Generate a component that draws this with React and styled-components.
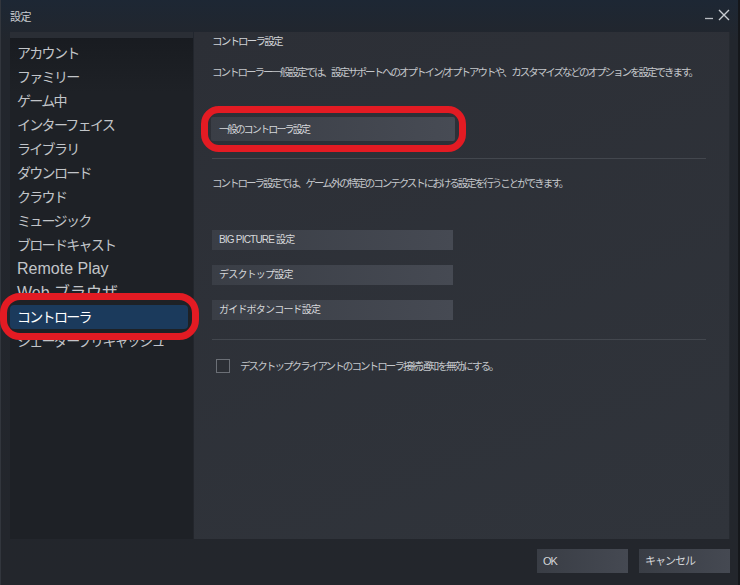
import React from "react";
import styled, { createGlobalStyle } from "styled-components";

const GlobalStyle = createGlobalStyle`
  html, body {
    margin: 0;
    padding: 0;
    background: #22252b;
  }
  body {
    font-family: "Liberation Sans", "Noto Sans CJK JP", sans-serif;
  }
`;

const menu = [
  { label: "アカウント" },
  { label: "ファミリー" },
  { label: "ゲーム中" },
  { label: "インターフェイス" },
  { label: "ライブラリ" },
  { label: "ダウンロード" },
  { label: "クラウド" },
  { label: "ミュージック" },
  { label: "ブロードキャスト" },
  { label: "Remote Play", latin: true },
  { label: "Web ブラウザ", latin: true },
  { label: "コントローラ", active: true },
  { label: "シェーダープリキャッシュ" },
];

const App = () => {
  return (
    <Window>
      <GlobalStyle />
      <TitleBar>
        <Title>設定</Title>
        <WinControls>
          <svg width="10" height="10" viewBox="0 0 10 10">
            <path d="M1 8.5h8" stroke="#b8bcc2" strokeWidth="1.3" />
          </svg>
          <svg width="12" height="12" viewBox="0 0 12 12">
            <path d="M1 1l10 10M11 1L1 11" stroke="#c8ccd2" strokeWidth="1.4" />
          </svg>
        </WinControls>
      </TitleBar>

      <Body>
        <Sidebar>
          <SideTop />
          <MenuList>
            {menu.map((m) => (
              <MenuItem key={m.label} $active={m.active} $latin={m.latin}>
                {m.label}
              </MenuItem>
            ))}
          </MenuList>
          <SideRing />
        </Sidebar>

        <Content>
          <Heading>コントローラ設定</Heading>
          <Text $top={17}>
            コントローラー一般設定では、設定サポートへのオプトイン/オプトアウトや、カスタマイズなどのオプションを設定できます。
          </Text>
          <ButtonWrap>
            <BigButton>一般のコントローラ設定</BigButton>
            <ButtonRing />
          </ButtonWrap>
          <Divider $top={17} />
          <Text $top={17}>
            コントローラ設定では、ゲーム外の特定のコンテクストにおける設定を行うことができます。
          </Text>
          <ButtonStack>
            <Button>BIG PICTURE 設定</Button>
            <Button>デスクトップ設定</Button>
            <Button>ガイドボタンコード設定</Button>
          </ButtonStack>
          <Divider $top={19} />
          <CheckRow>
            <Check />
            <CheckLabel>デスクトップクライアントのコントローラ接続通知を無効にする。</CheckLabel>
          </CheckRow>
        </Content>
      </Body>

      <Footer>
        <FooterButton>OK</FooterButton>
        <FooterButton>キャンセル</FooterButton>
      </Footer>
    </Window>
  );
};

export default App;

const Window = styled.div`
  width: 740px;
  height: 585px;
  display: flex;
  flex-direction: column;
  background: linear-gradient(180deg, #1d2734 0px, #22262d 40px, #23262c 100%);
  box-shadow: inset 1px 0 0 #32363d, inset -2px 0 0 #15171b;
  overflow: hidden;
`;

const TitleBar = styled.div`
  height: 32px;
  display: flex;
  align-items: center;
  justify-content: space-between;
  padding: 0 10px;
`;

const Title = styled.div`
  font-family: "Noto Sans CJK JP", sans-serif;
  font-size: 11px;
  color: #c9ccd0;
  letter-spacing: -0.5px;
`;

const WinControls = styled.div`
  display: flex;
  align-items: center;
  gap: 4px;
  margin-top: -2px;
`;

const Body = styled.div`
  height: 507px;
  display: flex;
  padding: 0 10px;
  gap: 1px;
`;

const Sidebar = styled.div`
  position: relative;
  width: 183px;
  display: flex;
  flex-direction: column;
  background: linear-gradient(180deg, #181b20 0px, #1e2126 60px, #1e2126 100%);
`;

const SideTop = styled.div`
  height: 6px;
  background: #2a2e35;
`;

const MenuList = styled.div`
  padding-top: 3px;
  display: flex;
  flex-direction: column;
`;

const MenuItem = styled.div`
  height: 24px;
  line-height: 24px;
  padding-left: 7px;
  margin-right: 5px;
  font-family: "Liberation Sans", "Noto Sans CJK JP", sans-serif;
  font-size: ${(p) => (p.$latin ? "16px" : "14px")};
  letter-spacing: ${(p) => (p.$latin ? "0" : "-1.7px")};
  color: ${(p) => (p.$active ? "#ffffff" : "#c2c5c9")};
  background: ${(p) => (p.$active ? "#1b3a5c" : "transparent")};
  border-radius: ${(p) => (p.$active ? "4px" : "0")};
  white-space: nowrap;
`;

const SideRing = styled.div`
  position: absolute;
  left: -10px;
  top: 261px;
  width: 199px;
  height: 47px;
  box-sizing: border-box;
  border: 7px solid #e31b23;
  border-radius: 20px;
  pointer-events: none;
`;

const Content = styled.div`
  flex: 1;
  display: flex;
  flex-direction: column;
  padding: 2px 24px 0 18px;
  background: linear-gradient(160deg, #2c2f36 0%, #30343b 100%);
  box-shadow: inset -1px 0 0 #262a30;
`;

const Heading = styled.div`
  font-family: "Noto Sans CJK JP", sans-serif;
  font-size: 10.5px;
  line-height: 14px;
  letter-spacing: -1.8px;
  color: #d0d3d7;
`;

const Text = styled.div`
  margin-top: ${(p) => p.$top}px;
  font-family: "Noto Sans CJK JP", sans-serif;
  font-size: 10.5px;
  line-height: 14px;
  letter-spacing: -2px;
  color: #c4c7cb;
  white-space: nowrap;
`;

const ButtonWrap = styled.div`
  position: relative;
  margin-top: 38px;
  margin-left: -1px;
  width: 244px;
`;

const BigButton = styled.div`
  height: 24px;
  line-height: 24px;
  padding-left: 8px;
  border-radius: 2px;
  font-family: "Noto Sans CJK JP", sans-serif;
  font-size: 10px;
  letter-spacing: -1.8px;
  color: #d6d8db;
  background: linear-gradient(90deg, #3a3e46 0%, #474b54 100%);
`;

const ButtonRing = styled.div`
  position: absolute;
  left: -10px;
  top: -11px;
  width: 265px;
  height: 46px;
  box-sizing: border-box;
  border: 7px solid #e31b23;
  border-radius: 18px;
  pointer-events: none;
`;

const Divider = styled.div`
  margin-top: ${(p) => p.$top}px;
  height: 1px;
  background: #43474e;
`;

const ButtonStack = styled.div`
  margin-top: 40px;
  display: flex;
  flex-direction: column;
  gap: 15px;
`;

const Button = styled.div`
  width: 234px;
  height: 20px;
  line-height: 20px;
  padding-left: 7px;
  font-family: "Liberation Sans", "Noto Sans CJK JP", sans-serif;
  font-size: 10px;
  letter-spacing: -0.8px;
  color: #d6d8db;
  background: linear-gradient(90deg, #3a3e46 0%, #464a53 100%);
`;

const CheckRow = styled.div`
  margin-top: 18px;
  padding-left: 4px;
  display: flex;
  align-items: center;
  gap: 10px;
`;

const Check = styled.div`
  width: 12px;
  height: 12px;
  border: 1px solid #6b6f76;
  background: #2c2f35;
`;

const CheckLabel = styled.div`
  font-family: "Noto Sans CJK JP", sans-serif;
  font-size: 10.5px;
  letter-spacing: -1.9px;
  color: #c4c7cb;
`;

const Footer = styled.div`
  flex: 1;
  display: flex;
  justify-content: flex-end;
  align-items: flex-start;
  gap: 11px;
  padding: 10px 10px 0 0;
`;

const FooterButton = styled.div`
  width: 85px;
  height: 24px;
  line-height: 24px;
  padding-left: 6px;
  font-family: "Liberation Sans", "Noto Sans CJK JP", sans-serif;
  font-size: 11px;
  letter-spacing: -1px;
  color: #d3d5d8;
  background: linear-gradient(90deg, #393d45 0%, #454952 100%);
`;
